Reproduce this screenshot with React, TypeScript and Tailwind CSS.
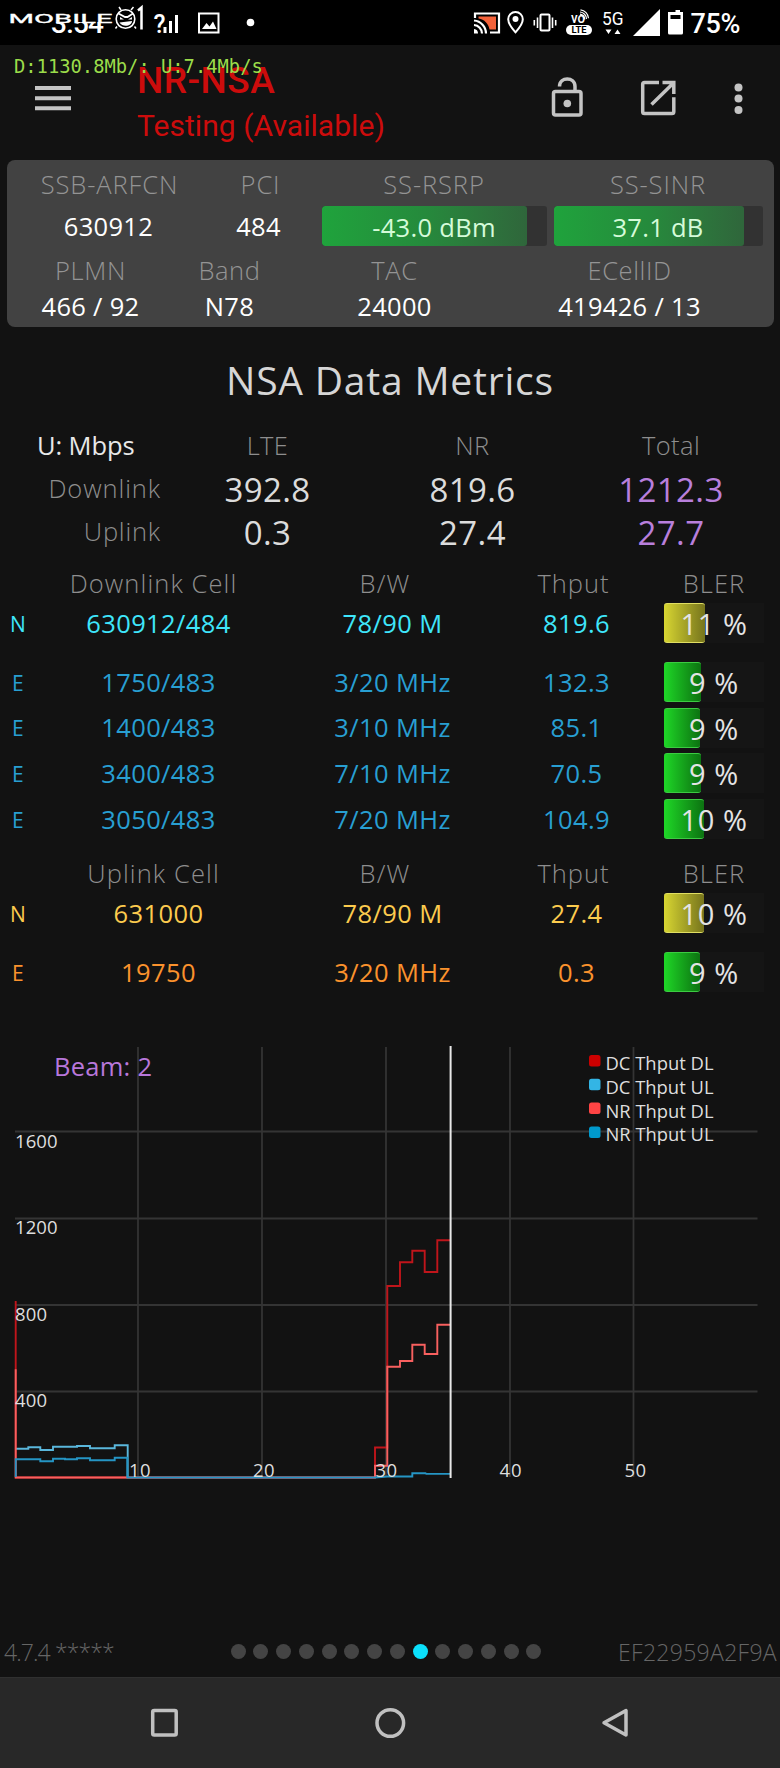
import type { ReactNode } from 'react';

interface CellRow {
  kind: string;
  cell: string;
  bw: string;
  thput: string;
  bler: number;
  fill: number;
  tone: string;
}

const downlink: CellRow[] = [
  { kind: 'N', cell: '630912/484', bw: '78/90 M', thput: '819.6', bler: 11, fill: 41, tone: 'text-[#3fe6fb]' },
  { kind: 'E', cell: '1750/483', bw: '3/20 MHz', thput: '132.3', bler: 9, fill: 36.5, tone: 'text-[#289fd2]' },
  { kind: 'E', cell: '1400/483', bw: '3/10 MHz', thput: '85.1', bler: 9, fill: 36, tone: 'text-[#289fd2]' },
  { kind: 'E', cell: '3400/483', bw: '7/10 MHz', thput: '70.5', bler: 9, fill: 37, tone: 'text-[#289fd2]' },
  { kind: 'E', cell: '3050/483', bw: '7/20 MHz', thput: '104.9', bler: 10, fill: 39.5, tone: 'text-[#289fd2]' },
];

const uplink: CellRow[] = [
  { kind: 'N', cell: '631000', bw: '78/90 M', thput: '27.4', bler: 10, fill: 39.5, tone: 'text-[#fccb4e]' },
  { kind: 'E', cell: '19750', bw: '3/20 MHz', thput: '0.3', bler: 9, fill: 36, tone: 'text-[#fb922d]' },
];

const legend = [
  { label: 'DC Thput DL', color: '#cc0000' },
  { label: 'DC Thput UL', color: '#33b5e5' },
  { label: 'NR Thput DL', color: '#ff4444' },
  { label: 'NR Thput UL', color: '#0099cc' },
];

function StatusBar() {
  return (
    <div className="relative h-[45px] bg-black">
      <svg width="780" height="45" viewBox="0 0 780 45" fill="none" className="block font-['Roboto']">
        <text x="51" y="33" fontSize="28" fontWeight="500" fill="#fff" textLength="53">3:54</text>
        <rect x="8" y="10" width="106" height="12" fill="#000" />
        <text x="8.5" y="22.8" fontSize="13.5" fontWeight="400" fill="#fff" stroke="#fff" strokeWidth="0.3" textLength="104" lengthAdjust="spacingAndGlyphs">MOBILE</text>
        {/* mascot */}
        <circle cx="125.500" cy="19" r="9.300" stroke="#fff" strokeWidth="1.600" fill="#000" />
        <path d="M121 10l-2-3M131 10l2.500-3M117 26.500l-1.500 2M134.500 26.500l1.500 2" stroke="#fff" strokeWidth="1.500" />
        <path d="M118.500 13.500l6.500 3.500h2.500l5.500-3.500" stroke="#fff" strokeWidth="1.800" />
        <path d="M120 17l4 2.500h-4zM132 17l-4 2.500h4zM119.500 22.500l12.500-1.500c0 5-9 7-12.500 1.500z" fill="#fff" />
        <path d="M138 10.500l3.500-3v22" stroke="#fff" strokeWidth="2.500" />

        {/* unknown sim signal */}
        <text x="153.500" y="32.500" fontSize="26" fontWeight="500" fill="#fff" textLength="12" lengthAdjust="spacingAndGlyphs">?</text>
        <path d="M165 27v6M170.500 21v12M176.500 15v18" stroke="#fff" strokeWidth="3" />
        {/* picture */}
        <rect x="199" y="13.500" width="19.500" height="19" stroke="#fff" strokeWidth="2" />
        <path d="M202 29l4.500-6 3 3.500 3.500-5 3.500 7.500z" fill="#fff" />
        <circle cx="250.500" cy="22.500" r="3.800" fill="#fff" />

        {/* cast */}
        <path d="M478.500 16.500h17.500v13h-6.500c-1-6-5-10-11-11z" fill="#f4623a" />
        <path d="M475 18v-4.500h24v19h-9" stroke="#fff" strokeWidth="2.200" />
        <path d="M474 20.500a13 13 0 0 1 12 13M474 25a8.500 8.500 0 0 1 8 8.500" stroke="#fff" strokeWidth="2.200" />
        <path d="M474 29a4.500 4.500 0 0 1 4 4.500h-4z" fill="#fff" />
        {/* location */}
        <path d="M515.500 12a7.300 7.300 0 0 1 7.300 7.300c0 5-7.300 13-7.300 13s-7.300-8-7.300-13a7.300 7.300 0 0 1 7.300-7.300z" stroke="#fff" strokeWidth="2" />
        <circle cx="515.500" cy="19" r="3" fill="#fff" />
        {/* vibrate */}
        <rect x="540.500" y="14.500" width="9" height="16" rx="1" stroke="#fff" strokeWidth="2" />
        <path d="M537.500 17.500v10.500M534.300 20v5.500M552.500 17.500v10.500M555.700 20v5.500" stroke="#fff" strokeWidth="1.600" />
        {/* volte */}
        <text x="571" y="22.500" fontSize="14" fontWeight="500" fill="#fff" textLength="14" lengthAdjust="spacingAndGlyphs">vo</text>
        <path d="M580 14.200a5.500 5.500 0 0 1 4.700 5.300M580.500 9.800a9 9 0 0 1 8 8.500M580 12a7 7 0 0 1 6.500 7" stroke="#fff" strokeWidth="1.200" />
        <rect x="566" y="25" width="26" height="10" rx="5" fill="#fff" />
        <text x="571.500" y="33" fontSize="9" fontWeight="700" fill="#000" textLength="15" lengthAdjust="spacingAndGlyphs">LTE</text>
        {/* 5G */}
        <text x="602" y="25" fontSize="18.500" fontWeight="400" fill="#fff" textLength="21.500" lengthAdjust="spacingAndGlyphs">5G</text>
        <path d="M605.500 29.500h6l-3 4.500zM614.500 34h6l-3-4.500z" fill="#fff" />
        <path d="M633 36h27V9z" fill="#fff" />
        {/* battery */}
        <path d="M672 12h3.500v-2h4.500v2h3v21a1.500 1.500 0 0 1-1.500 1.500h-12a1.500 1.500 0 0 1-1.500-1.500v-21z" fill="#fff" />
        <rect x="670.500" y="15" width="10" height="4" fill="#000" />
        <text x="690.500" y="33" fontSize="27" fontWeight="500" fill="#fff" textLength="50">75%</text>
      </svg>
      <p className="absolute left-[14px] top-[55px] z-10 whitespace-pre font-['DejaVu_Sans_Mono'] text-[18.8px] leading-6 text-[#9bdc4a]">
        D:1130.8Mb/: U:7.4Mb/s
      </p>
    </div>
  );
}

function AppHeader() {
  return (
    <header className="flex h-[115px] items-start">
      <svg width="137" height="115" viewBox="0 0 137 115" stroke="#c4c4c4" strokeWidth="4">
        <path d="M35 43h36M35 53.200h36M35 63.300h36" />
      </svg>
      <div className="flex-1 pt-[17px] font-['Roboto'] text-[#cc0c0c]">
        <h1 className="text-[37px] font-medium leading-[38px] tracking-[0.5px]">NR-NSA</h1>
        <p className="pt-[9px] text-[30px] leading-[34px] tracking-[0.05px]">Testing (Available)</p>
      </div>
      <svg width="250" height="115" viewBox="530 45 250 115" fill="none" stroke="#c4c4c4" strokeWidth="3.500">
        <rect x="553.500" y="91.500" width="27.500" height="23.500" rx="2" />
        <path d="M559.500 86.500c0-10 15.500-10 15.500 0v4.500" />
        <circle cx="567.300" cy="103.500" r="3.800" fill="#c4c4c4" stroke="none" />
        <path d="M659 82.500h-14.500a1.800 1.800 0 0 0-1.800 1.800v27.500a1.800 1.800 0 0 0 1.800 1.800h27.500a1.800 1.800 0 0 0 1.800-1.800v-14.500M662.500 82.500h11.300v11.500M673.500 83l-22 21.500" />
        <g fill="#c4c4c4" stroke="none">
          <circle cx="738.500" cy="87.500" r="4" />
          <circle cx="738.500" cy="98.500" r="4" />
          <circle cx="738.500" cy="110" r="4" />
        </g>
      </svg>
    </header>
  );
}

function SignalBar({ children, className, fill }: { children: ReactNode; className: string; fill: string }) {
  return (
    <div className={`relative h-10 overflow-hidden rounded-[3px] bg-[#323232] ${className}`}>
      <div className={`h-full rounded-[3px] bg-linear-to-r from-[#1fa33c] via-[#258a3c] to-[#2f663b] ${fill}`} />
      <span className="absolute inset-0 text-center leading-[42px] text-[#d5fbd9]">{children}</span>
    </div>
  );
}

function CellCard() {
  return (
    <section className="ml-[6.5px] h-[167px] w-[767px] rounded-lg bg-[#424242] pt-[5px] text-center text-[25.5px] tracking-[0.3px] text-white">
      <div className="flex h-[38px] items-center font-light tracking-[0.9px] text-[#949494]">
        <span className="w-[206px]">SSB-ARFCN</span>
        <span className="w-24">PCI</span>
        <span className="ml-[13px] w-[225px]">SS-RSRP</span>
        <span className="ml-[7px] w-[209px]">SS-SINR</span>
      </div>
      <div className="mt-[3px] flex h-10 items-center">
        <span className="w-[204px] pt-px">630912</span>
        <span className="w-24 pt-px">484</span>
        <SignalBar className="ml-[15px] w-[225px]" fill="w-[205px]">-43.0 dBm</SignalBar>
        <SignalBar className="ml-[7px] w-[209px]" fill="w-[190px]">37.1 dB</SignalBar>
      </div>
      <div className="mt-[5px] flex h-[38px] items-center font-light tracking-[0.6px] text-[#949494]">
        <span className="w-[168px]">PLMN</span>
        <span className="w-[110px]">Band</span>
        <span className="w-[220px]">TAC</span>
        <span className="w-[250px]">ECellID</span>
      </div>
      <div className="flex h-[34px] items-center">
        <span className="w-[168px]">466 / 92</span>
        <span className="w-[110px]">N78</span>
        <span className="w-[220px]">24000</span>
        <span className="w-[250px]">419426 / 13</span>
      </div>
    </section>
  );
}

function Metrics() {
  const cols = 'grid grid-cols-[161px_213px_197px_200px] items-center text-center';
  return (
    <section className="mt-[20px] text-[25.5px] leading-none">
      <div className={`${cols} h-[42px] font-light tracking-[0.4px] text-[#8e8e8e]`}>
        <span className="pl-[37px] text-left font-normal tracking-[-0.1px] text-[#e8e8e8]">U: Mbps</span>
        <span>LTE</span>
        <span>NR</span>
        <span>Total</span>
      </div>
      <div className={`${cols} h-11 text-[33px] leading-none tracking-[0.4px] text-[#dcdcdc]`}>
        <span className="text-right text-[25.5px] font-light leading-none tracking-[0.9px] text-[#8e8e8e]">Downlink</span>
        <span>392.8</span>
        <span>819.6</span>
        <span className="text-[#b87fdc]">1212.3</span>
      </div>
      <div className={`${cols} h-[42px] text-[33px] leading-none tracking-[0.4px] text-[#dcdcdc]`}>
        <span className="text-right text-[25.5px] font-light leading-none tracking-[0.8px] text-[#8e8e8e]">Uplink</span>
        <span>0.3</span>
        <span>27.4</span>
        <span className="text-[#b87fdc]">27.7</span>
      </div>
    </section>
  );
}

function TableHead({ title }: { title: string }) {
  return (
    <div className="grid h-10 grid-cols-[36px_235px_228px_149px_132px] items-center pt-px text-center text-[25.5px] font-light text-[#8e8e8e]">
      <span />
      <span className="tracking-[1.1px]">{title}</span>
      <span className="tracking-[1.2px]">B/W</span>
      <span className="tracking-[1px]">Thput</span>
      <span className="tracking-[1px]">BLER</span>
    </div>
  );
}

function TableRow({ row }: { row: CellRow }) {
  const bar = row.kind === 'N' ? 'from-[#d8d632] to-[#77751c] border-[#e0de62]' : 'from-[#1fd827] to-[#0c7311] border-[#3ccb42]';
  return (
    <div className={`grid h-10 grid-cols-[36px_245px_223px_145px_115px] items-center text-center text-[25.5px] tracking-[0.4px] ${row.tone}`}>
      <span className="pt-[3px] text-[21px]">{row.kind}</span>
      <span>{row.cell}</span>
      <span>{row.bw}</span>
      <span>{row.thput}</span>
      <div className="relative ml-[15px] h-10 bg-[#151515]">
        <div className={`h-full rounded-[3px] border-y bg-linear-to-r ${bar}`} style={{ width: row.fill }} />
        <span className="absolute inset-0 text-center text-[29px] leading-[41px] tracking-[0.6px] text-[#e4e4e4]">{row.bler} %</span>
      </div>
    </div>
  );
}

function Chart() {
  return (
    <svg width="780" height="460" viewBox="0 0 780 460" fill="none" className="mt-[38px] block">
      <g stroke="#343434" strokeWidth="1.800">
        <path d="M138 17v430M262 17v430M386 17v430M510 17v430M633.500 17v430" />
        <path d="M15 101.500h742.500M15 188.500h742.500M15 275h742.500M15 361.500h742.500" />
      </g>
      <g strokeWidth="1.900">
        <path d="M15.700 271v176.500H375V417.500h12.300V256H400v-23.700h12.300v-11.600h12.400V242h12.600v-31.700h13" stroke="#c0151b" />
        <path d="M15.700 418.700h12.600v-1.400h12v2.700H53v-3.300h24v-.7h13v2.300h24.700v-3h13v32.200" stroke="#5ab7dc" />
        <path d="M15.700 339.300v108.200H375v-11.800h12.300v-99H400V331h12.300v-16.300h12.400v9.300h12.600v-29.300h13" stroke="#f8605f" />
        <path d="M15.700 447v-17.700h24.600v2H53v-2.600h12v.6h12v-1h13v2h24.700v-2.600h12.600v19.800H375l12.300-1h25v-3.300h13l1 .7h24" stroke="#2595c4" />
      </g>
      <path d="M450.600 16v432" stroke="#e8e8e8" strokeWidth="2" />
      <g fill="#dedede" fontSize="18.500">
        <text x="15" y="117.600" textLength="42.500">1600</text>
        <text x="15" y="204.300" textLength="42.500">1200</text>
        <text x="15" y="290.800" textLength="32">800</text>
        <text x="15" y="377.300" textLength="32">400</text>
        <text x="129" y="446.700" textLength="21.500">10</text>
        <text x="253" y="446.700" textLength="21.500">20</text>
        <text x="375.500" y="446.700" textLength="21.500">30</text>
        <text x="499.500" y="446.700" textLength="22">40</text>
        <text x="624.500" y="446.700" textLength="21.500">50</text>
      </g>
      <text x="54" y="45.700" fontSize="25.500" fill="#b877db" textLength="98">Beam: 2</text>
      {legend.map((item, i) => (
        <g key={item.label}>
          <rect x="589" y={25 + i * 23.800} width="11.500" height="11.500" rx="2.500" fill={item.color} />
          <text x="605.500" y={40 + i * 23.800} fontSize="19" fill="#dedede" textLength="108" lengthAdjust="spacingAndGlyphs">
            {item.label}
          </text>
        </g>
      ))}
    </svg>
  );
}

function Footer() {
  return (
    <footer className="mt-auto">
      <div className="flex h-[51px] items-center justify-between pl-1 pr-[3px] text-[23px] font-light text-[#666666]">
        <span className="w-[226px] pt-[2px] tracking-[-0.9px]">4.7.4 *****</span>
        <div className="flex gap-[7.75px]">
          {Array.from({ length: 14 }, (_, i) => (
            <i key={i} className={`size-[15px] rounded-full ${i === 8 ? 'bg-[#0be0fb]' : 'bg-[#444444]'}`} />
          ))}
        </div>
        <span className="w-[235px] pt-[2px] text-right tracking-[0.3px]">EF22959A2F9A</span>
      </div>
      <nav className="h-[91px] border-t border-[#303030] bg-[#282828]">
        <svg width="780" height="90" viewBox="0 1678 780 90" fill="none" stroke="#c0c0c0" strokeWidth="3.500" strokeLinejoin="round">
          <rect x="152.700" y="1710.500" width="23.500" height="24.500" rx="1.500" />
          <circle cx="390.300" cy="1723" r="13.300" />
          <path d="M626 1710.500v24.500l-22-12.200z" />
        </svg>
      </nav>
    </footer>
  );
}

export default function App() {
  return (
    <div className="flex h-[1768px] w-[780px] flex-col overflow-hidden whitespace-nowrap bg-[#121212] font-['Open_Sans','Noto_Sans',sans-serif]">
      <StatusBar />
      <AppHeader />
      <CellCard />
      <h2 className="mt-[28px] h-[50px] text-center text-[39px] leading-[50px] tracking-[0.8px] text-[#d6d6d6]">NSA Data Metrics</h2>
      <Metrics />
      <section className="mt-[10px]">
        <TableHead title="Downlink Cell" />
        <TableRow row={downlink[0]} />
        <div className="mt-[19px] flex flex-col gap-[5.6px]">
          {downlink.slice(1).map((row) => (
            <TableRow key={row.cell} row={row} />
          ))}
        </div>
      </section>
      <section className="mt-[14px]">
        <TableHead title="Uplink Cell" />
        <TableRow row={uplink[0]} />
        <div className="mt-[19px]">
          <TableRow row={uplink[1]} />
        </div>
      </section>
      <Chart />
      <Footer />
    </div>
  );
}
